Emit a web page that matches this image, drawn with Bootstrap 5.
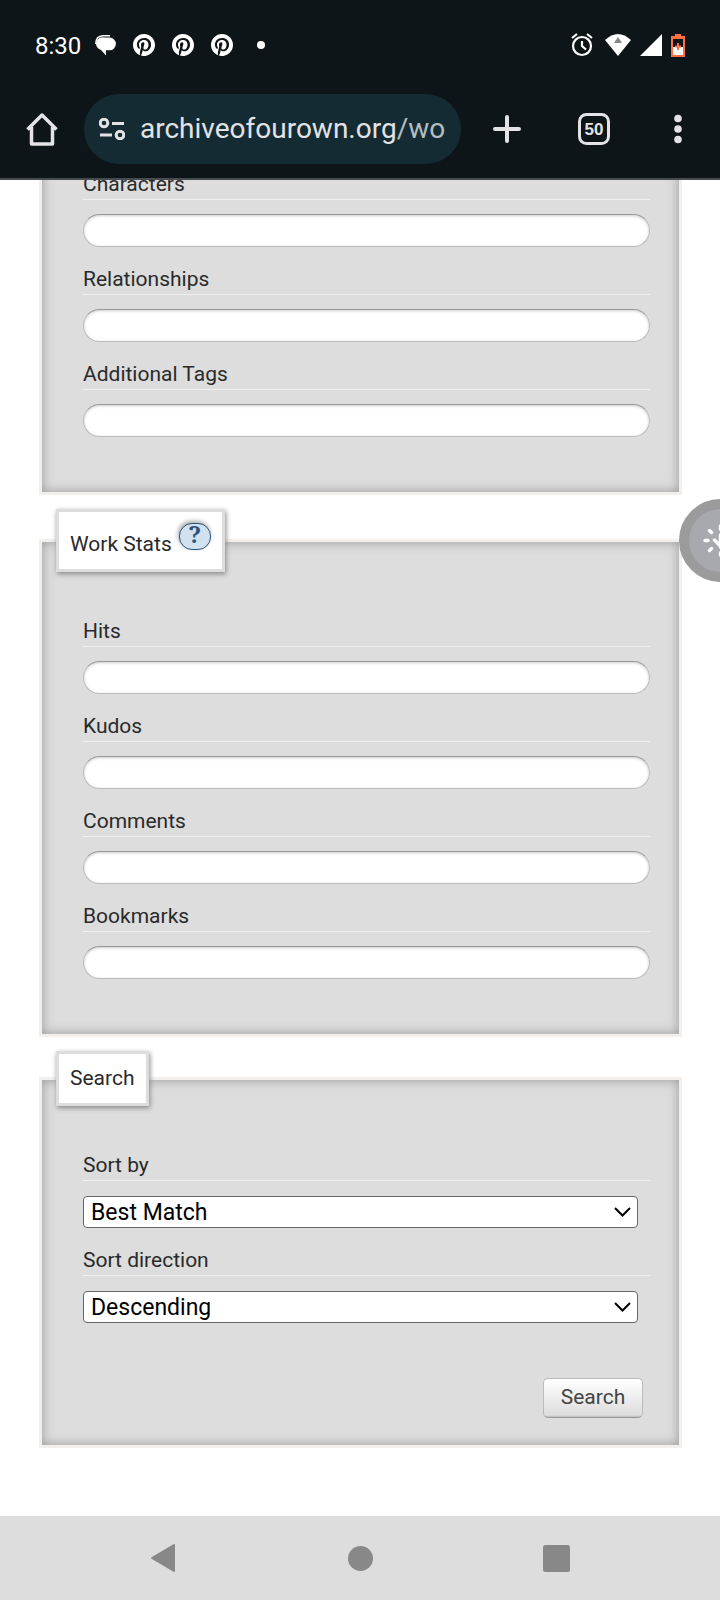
<!DOCTYPE html>
<html lang="en">
<head>
<meta charset="utf-8">
<meta name="viewport" content="width=device-width, initial-scale=1">
<title>Work Search</title>
<link href="https://cdn.jsdelivr.net/npm/bootstrap@5.3.0/dist/css/bootstrap.min.css" rel="stylesheet">
<style>
  body { font-family: Roboto, "Liberation Sans", sans-serif; font-size: 21px; line-height: 26px; color: #2a2a2a; background: #fff; }
  svg { display: block; flex-shrink: 0; }
  .top-chrome { background: #0d1518; border-bottom: 2px solid #454b4e; color: #e3e3e6; }
  .status-row { height: 80px; padding: 10px 35px 0 35px; color: #fff; }
  .clock { font-size: 24px; width: 60px; padding-top: 2px; }
  .notices { gap: 17px; }
  .signals { gap: 9px; }
  .tool-row { height: 98px; }
  .tool-btn { background: none; border: 0; padding: 0; color: inherit; height: 70px; display: flex; align-items: center; justify-content: center; flex: none; }
  .w-home { width: 84px; } .w-plus { width: 92px; } .w-tabs { width: 82px; } .w-menu { width: 85px; }
  .address { height: 70px; border-radius: 35px; background: #142b33; padding: 0 15px; gap: 15px; min-width: 0; }
  .address a { font-size: 28px; line-height: 36px; color: #e3e3e6; text-decoration: none; white-space: nowrap; overflow: hidden; }
  .address a span { color: #b4bec2; }
  .search-form { padding: 0 38px 68px 39px; }
  .panel { background: #ddd; border: 3px solid #f3efec; padding: 46px 29px 36px 41px; margin-bottom: 14px; box-shadow: inset 0 0 12px #999; }
  .panel-scrolled { margin-top: -58px; }
  .panel-last { margin-bottom: 0; padding-bottom: 27px; }
  .panel legend { float: none; width: auto; margin: 0 0 0 -27px; padding: 11px 11px 12px; font-size: 21px; line-height: 26px; background: #fff; border: 3px solid #ddd; box-shadow: 1px 2px 5px #888; }
  .help-link { width: 32px; height: 27px; border: 1px solid #2a547c; border-radius: 13px; background: #d1e1ef; color: #2a547c; font: bold 23px/21px "Noto Serif", "DejaVu Serif", serif; text-align: center; text-decoration: none; margin: 0 0 7px 7px; box-shadow: -1px -2px 4px #aaa; }
  .field { margin-bottom: 19px; }
  .field label { display: block; padding-bottom: 2px; border-bottom: 1px solid #f3efec; }
  .field input { display: block; width: 100%; height: 33px; margin-top: 14px; padding: 0 14px; border: 1px solid #bbb; border-top-color: #999; border-radius: 17px; background: #fff; box-shadow: inset 0 1px 3px #ccc; }
  .pick { position: relative; margin: 15px 12px 0 0; }
  .pick select { display: block; appearance: none; width: 100%; height: 32px; padding: 1px 30px 0 7px; border: 1px solid #666; border-radius: 4px; background: #fff; color: #000; font-size: 23px; line-height: 28px; }
  .pick svg { position: absolute; right: 7px; top: 11px; pointer-events: none; }
  .go { width: 100px; height: 40px; margin: 36px 7px 0 0; padding: 0 0 3px; border: 1px solid #bbb; border-bottom-color: #999; border-radius: 5px; background: linear-gradient(#fff 2%, #ddd 95%, #bbb); color: #444; font-size: 21px; }
  .float-tap { position: absolute; right: -42px; top: 499px; width: 83px; height: 83px; border: 10px solid #9b9b9b; border-radius: 50%; background: #a7a9ae; padding: 0; }
  .sys-nav { height: 84px; background: #ddd; padding: 0 65px; }
  .sys-nav button { background: none; border: 0; padding: 0; height: 84px; display: flex; align-items: center; justify-content: center; flex: 1 1 0; }
</style>
</head>
<body>
<div class="position-relative overflow-hidden min-vh-100 d-flex flex-column">

<header class="top-chrome position-relative z-1">
  <div class="status-row d-flex align-items-center justify-content-between">
    <div class="d-flex align-items-center">
      <span class="clock">8:30</span>
      <div class="notices d-flex align-items-center">
        <svg width="21" height="21" viewBox="0 0 21 21"><path d="M.8 9Q.8 1 8 .8H15" fill="none" stroke="#fff" stroke-width="1.500"/><path d="M9 2.500h5.500a6.300 6.300 0 0 1 0 12.800H11V20.500L6 15A6.400 6.400 0 0 1 9 2.500z" fill="#fff"/></svg>
        <svg width="22" height="22" viewBox="0 0 24 24"><path id="pin" fill="#fff" d="M12 0C5.373 0 0 5.372 0 12c0 5.084 3.163 9.426 7.627 11.174-.105-.949-.2-2.405.042-3.441.218-.937 1.407-5.965 1.407-5.965s-.359-.719-.359-1.782c0-1.668.967-2.914 2.171-2.914 1.023 0 1.518.769 1.518 1.690 0 1.029-.655 2.568-.994 3.995-.283 1.194.599 2.169 1.777 2.169 2.133 0 3.772-2.249 3.772-5.495 0-2.873-2.064-4.882-5.012-4.882-3.414 0-5.418 2.561-5.418 5.207 0 1.031.397 2.138.893 2.738a.36.36 0 0 1 .083.345l-.333 1.360c-.053.220-.174.267-.402.161-1.499-.698-2.436-2.889-2.436-4.649 0-3.785 2.750-7.262 7.929-7.262 4.163 0 7.398 2.967 7.398 6.931 0 4.136-2.607 7.464-6.227 7.464-1.216 0-2.359-.631-2.750-1.378l-.748 2.853c-.271 1.043-1.002 2.350-1.492 3.146A12 12 0 1 0 12 0z"/></svg>
        <svg width="22" height="22" viewBox="0 0 24 24"><use href="#pin"/></svg>
        <svg width="22" height="22" viewBox="0 0 24 24"><use href="#pin"/></svg>
        <svg width="22" height="8" viewBox="0 0 22 8"><circle cx="11" cy="4" r="4" fill="#fff"/></svg>
      </div>
    </div>
    <div class="signals d-flex align-items-center">
      <svg width="25" height="24" viewBox="0 0 25 24" fill="none" stroke="#fff" stroke-width="2.200"><circle cx="11" cy="13" r="9"/><path d="M11 8v5l4 3.500M1 5l5-4M21 5l-5-4"/></svg>
      <svg width="26" height="22" viewBox="0 0 26 22"><path d="M0 6Q13-6 26 6L13 22z" fill="#fff"/><path d="M9 9l4-6 4 6z" fill="#888"/></svg>
      <svg width="22" height="22" viewBox="0 0 22 22"><path d="M22 0v22H0z" fill="#fff"/></svg>
      <svg width="14" height="23" viewBox="0 0 14 23"><path d="M4 0h6v2h4v21H0V2h4z" fill="#ff6f40"/><path d="M2 5h10v8H2z" fill="#0d1518"/><path d="M2 13h10v8H2z" fill="#fff"/><path d="M7 9v7M4 12.500h6" stroke="#ff6f40" stroke-width="2"/></svg>
    </div>
  </div>
  <nav class="tool-row d-flex align-items-center">
    <button class="tool-btn w-home" type="button" aria-label="Home"><svg width="32" height="34" viewBox="0 0 32 34" fill="none" stroke="#e3e3e6" stroke-width="3.500"><path d="M1.500 17.500L16 3l14.500 14.500M5.500 15v17h21V15" stroke-linejoin="round"/></svg></button>
    <div class="address d-flex align-items-center flex-grow-1">
      <svg width="26" height="22" viewBox="0 0 26 22" fill="none" stroke="#e3e3e6" stroke-width="3"><circle cx="5" cy="5" r="3.800"/><path d="M13 5.500h12M1 17h12"/><circle cx="21" cy="17" r="3.800"/></svg>
      <a href="#">archiveofourown.org<span>/wo</span></a>
    </div>
    <button class="tool-btn w-plus" type="button" aria-label="New tab"><svg width="28" height="28" viewBox="0 0 28 28" stroke="#e3e3e6" stroke-width="4" stroke-linecap="round"><path d="M14 2v24M2 14h24"/></svg></button>
    <button class="tool-btn w-tabs" type="button" aria-label="Tabs"><svg width="32" height="32" viewBox="0 0 32 32"><rect x="1.500" y="1.500" width="29" height="29" rx="7" fill="none" stroke="#e3e3e6" stroke-width="3"/><text x="16" y="22" text-anchor="middle" font-family="Liberation Sans, sans-serif" font-size="17" font-weight="700" fill="#e3e3e6">50</text></svg></button>
    <button class="tool-btn w-menu" type="button" aria-label="Menu"><svg width="8" height="30" viewBox="0 0 8 30" fill="#e3e3e6"><circle cx="4" cy="4.500" r="3.800"/><circle cx="4" cy="15" r="3.800"/><circle cx="4" cy="25.500" r="3.800"/></svg></button>
  </nav>
</header>

<main class="flex-grow-1">
<form class="search-form">
  <fieldset class="panel panel-scrolled">
    <div class="field"><label for="characters">Characters</label><input id="characters" type="text"></div>
    <div class="field"><label for="relationships">Relationships</label><input id="relationships" type="text"></div>
    <div class="field"><label for="tags">Additional Tags</label><input id="tags" type="text"></div>
  </fieldset>

  <fieldset class="panel">
    <legend><span class="d-flex align-items-end">Work Stats<a class="help-link" href="#">?</a></span></legend>
    <div class="field"><label for="hits">Hits</label><input id="hits" type="text"></div>
    <div class="field"><label for="kudos">Kudos</label><input id="kudos" type="text"></div>
    <div class="field"><label for="comments">Comments</label><input id="comments" type="text"></div>
    <div class="field"><label for="bookmarks">Bookmarks</label><input id="bookmarks" type="text"></div>
  </fieldset>

  <fieldset class="panel panel-last">
    <legend>Search</legend>
    <div class="field"><label for="sort">Sort by</label>
      <div class="pick"><select id="sort"><option>Best Match</option></select><svg width="17" height="10" viewBox="0 0 17 10" fill="none" stroke="#000" stroke-width="2"><path d="M1 1l7.500 7.500L16 1"/></svg></div></div>
    <div class="field"><label for="direction">Sort direction</label>
      <div class="pick"><select id="direction"><option>Descending</option></select><svg width="17" height="10" viewBox="0 0 17 10" fill="none" stroke="#000" stroke-width="2"><path d="M1 1l7.500 7.500L16 1"/></svg></div></div>
    <div class="d-flex justify-content-end"><button class="go" type="submit">Search</button></div>
  </fieldset>
</form>
</main>

<footer class="sys-nav d-flex">
  <button type="button" aria-label="Back"><svg width="26" height="30" viewBox="0 0 26 30"><path d="M24 2v26L2 15z" fill="#888" stroke="#888" stroke-width="2" stroke-linejoin="round"/></svg></button>
  <button type="button" aria-label="Home screen"><svg width="25" height="25" viewBox="0 0 25 25"><circle cx="12.500" cy="12.500" r="12.500" fill="#888"/></svg></button>
  <button type="button" aria-label="Recent apps"><svg width="27" height="27" viewBox="0 0 27 27"><rect width="27" height="27" rx="2.500" fill="#888"/></svg></button>
</footer>

<button class="float-tap" type="button" aria-label="Tap assistant"><svg width="63" height="63" viewBox="0 0 63 63" fill="none" stroke="#fff" stroke-width="3.500" stroke-linecap="round"><path d="M16 31.500h3M20.500 21.500l2 2M20.500 41.500l2-2M31.500 17v3M31.500 44v2M25.500 31l6 6M31.500 26v12"/></svg></button>
</div>
<script src="https://cdn.jsdelivr.net/npm/bootstrap@5.3.0/dist/js/bootstrap.bundle.min.js"></script>
</body>
</html>
